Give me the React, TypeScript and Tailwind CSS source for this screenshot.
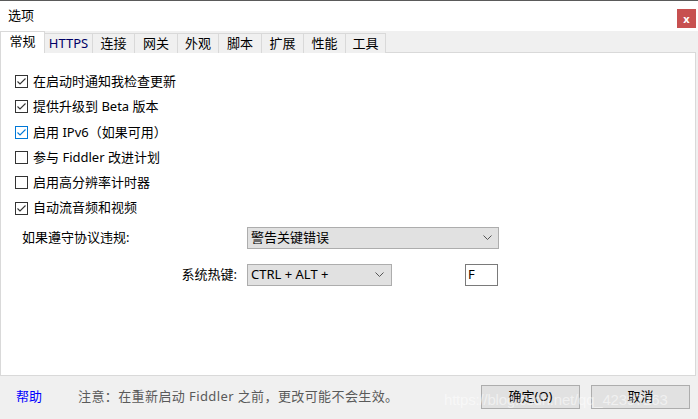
import React from 'react'

const font = { fontFamily: '"Noto Sans", "Noto Sans CJK SC", sans-serif' }

const tabs = ['HTTPS', '连接', '网关', '外观', '脚本', '扩展', '性能', '工具']
const tabWidths = ['w-[48px]', 'w-[42px]', 'w-[43px]', 'w-[41px]', 'w-[43px]', 'w-[42px]', 'w-[42px]', 'w-[40px]']

const options = [
  { label: '在启动时通知我检查更新', checked: true },
  { label: '提供升级到 Beta 版本', checked: true },
  { label: '启用 IPv6（如果可用）', checked: true, focus: true },
  { label: '参与 Fiddler 改进计划', checked: false },
  { label: '启用高分辨率计时器', checked: false },
  { label: '自动流音频和视频', checked: true },
]

const Check = ({ checked, focus }: { checked: boolean; focus?: boolean }) => (
  <span
    className={`flex h-[13px] w-[13px] shrink-0 items-center justify-center border bg-white ${
      focus ? 'border-[#0078d7]' : 'border-[#333333]'
    }`}
  >
    {checked && (
      <svg width="11" height="11" viewBox="0 0 11 11">
        <path
          d="M1.5 5.5 L4 8 L9.5 2.5"
          fill="none"
          stroke={focus ? '#0078d7' : '#333333'}
          strokeWidth="1.1"
        />
      </svg>
    )}
  </span>
)

const Chevron = () => (
  <svg width="9" height="6" viewBox="0 0 9 6">
    <path d="M0.5 0.5 L4.5 4.5 L8.5 0.5" fill="none" stroke="#555" strokeWidth="1" />
  </svg>
)

export default function App() {
  return (
    <div className="relative h-[419px] w-[698px] overflow-hidden bg-[#f0f0f0] text-[13px] text-black" style={font}>
      {/* title bar */}
      <div className="flex h-[31px] items-center justify-between border-t border-[#5a5a5a] bg-white pl-[8px] pr-[2px]">
        <span>选项</span>
        <button className="mt-[4px] flex h-[19px] w-[19px] items-center justify-center bg-[#c75050] text-[11px] font-bold leading-none text-white">
          x
        </button>
      </div>

      {/* tabs */}
      <div className="flex h-[22px] items-end">
        <div className="relative z-10 flex h-[22px] w-[45px] items-center justify-center border border-b-0 border-[#d9d9d9] bg-white pb-[1px]">
          常规
        </div>
        {tabs.map((t, i) => (
          <div
            key={t}
            className={`flex h-[20px] ${tabWidths[i]} items-center justify-center border border-l-0 border-b-0 border-[#d9d9d9] bg-[#f0f0f0] ${
              t === 'HTTPS' ? 'text-[#000066]' : ''
            }`}
          >
            {t}
          </div>
        ))}
      </div>

      {/* panel */}
      <div className="-mt-[1px] h-[324px] w-[696px] border border-[#d9d9d9] bg-white">
        <div className="flex flex-col gap-[6px] pl-[14px] pt-[19px]">
          {options.map((o) => (
            <label key={o.label} className="flex h-[19.3px] items-center gap-[5px]">
              <Check checked={o.checked} focus={o.focus} />
              <span>{o.label}</span>
            </label>
          ))}
        </div>

        <div className="mt-[9px] flex items-center">
          <span className="w-[246px] pl-[21px]">如果遵守协议违规:</span>
          <div className="flex h-[22px] w-[252px] items-center justify-between border border-[#adadad] bg-[#e1e1e1] pl-[3px] pr-[6px]">
            <span>警告关键错误</span>
            <Chevron />
          </div>
        </div>

        <div className="mt-[15px] flex items-center">
          <span className="w-[236px] text-right">系统热键:</span>
          <div className="ml-[10px] flex h-[22px] w-[145px] items-center justify-between border border-[#adadad] bg-[#e1e1e1] pl-[3px] pr-[7px]">
            <span>CTRL + ALT +</span>
            <Chevron />
          </div>
          <div className="ml-[73px] flex h-[22px] w-[33px] items-center border border-[#7a7a7a] bg-white pl-[2px]">
            F
          </div>
        </div>
      </div>

      {/* footer */}
      <div className="flex h-[42px] items-center">
        <span className="ml-[16px] text-[#0000ff]">帮助</span>
        <span className="ml-[36px] tracking-[0.4px] text-[#5a5a5a]">注意：在重新启动 Fiddler 之前，更改可能不会生效。</span>
        <button className="ml-auto flex h-[24px] w-[99px] items-center justify-center border border-[#adadad] bg-[#e1e1e1]">
          确定(O)
        </button>
        <button className="ml-[11px] mr-[8px] flex h-[24px] w-[99px] items-center justify-center border border-[#adadad] bg-[#e1e1e1]">
          取消
        </button>
      </div>

      {/* watermark */}
      <span
        className="pointer-events-none absolute left-[444px] top-[389px] text-[15px] tracking-[-0.2px] text-white/50"
        style={{ fontFamily: '"Liberation Sans", sans-serif' }}
      >
        https://blog.csdn.net/qq_42397263
      </span>
    </div>
  )
}
